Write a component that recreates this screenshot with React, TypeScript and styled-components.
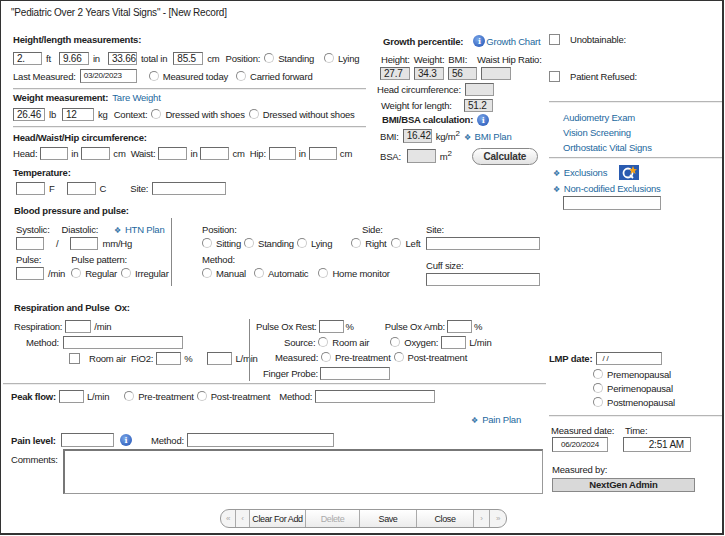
import styled, { createGlobalStyle } from "styled-components";

const Global = createGlobalStyle`
  body { margin: 0; background: #fff; font-family: "Liberation Sans", Arial, sans-serif; font-size: 9.5px; letter-spacing: -0.2px; color: #222; }
`;

const Frame = styled.div`
  width: 721px;
  height: 532px;
  border: 1px solid #333;
  border-right-width: 2px;
  border-bottom-width: 2px;
  display: flex;
  flex-direction: column;
`;
const Title = styled.div`
  height: 28px;
  padding: 6px 0 0 10px;
  box-sizing: border-box;
  font-size: 10px;
`;
const Main = styled.div`
  display: grid;
  grid-template-columns: 545px 176px;
`;
const TopGrid = styled.div`
  display: grid;
  grid-template-columns: 368px 177px;
`;
const Col = styled.div<{ $pl?: number }>`
  display: flex;
  flex-direction: column;
  padding-left: ${(p) => p.$pl ?? 0}px;
`;
const Head = styled.div<{ $mt?: number; $h?: number }>`
  font-weight: bold;
  height: ${(p) => p.$h ?? 14}px;
  line-height: ${(p) => p.$h ?? 14}px;
  margin-top: ${(p) => p.$mt ?? 0}px;
  display: flex;
  align-items: center;
  gap: 4px;
  white-space: nowrap;
`;
const Row = styled.div<{ $h?: number; $mt?: number; $gap?: number; $pl?: number }>`
  display: flex;
  align-items: center;
  height: ${(p) => p.$h ?? 16}px;
  margin-top: ${(p) => p.$mt ?? 0}px;
  padding-left: ${(p) => p.$pl ?? 0}px;
  gap: ${(p) => p.$gap ?? 4}px;
  white-space: nowrap;
`;
const Input = styled.div<{ $w: number; $gray?: boolean; $h?: number; $align?: string }>`
  width: ${(p) => p.$w}px;
  height: ${(p) => p.$h ?? 13}px;
  box-sizing: border-box;
  border: 1px solid #9a9a9a;
  border-top-color: #6a6a6a;
  border-left-color: #6a6a6a;
  background: ${(p) => (p.$gray ? "#e4e4e4" : "#fff")};
  padding: 0 3px;
  line-height: 11px;
  font-size: 10px;
  text-align: ${(p) => p.$align ?? "left"};
  flex-shrink: 0;
`;
const RadioDot = styled.span`
  display: inline-block;
  width: 8px;
  height: 8px;
  border: 1px solid #888;
  border-bottom-color: #ccc;
  border-right-color: #ccc;
  border-radius: 50%;
  margin-right: 4px;
  vertical-align: -1px;
`;
const Opt = styled.span<{ $ml?: number }>`
  margin-left: ${(p) => p.$ml ?? 0}px;
`;
const Box = styled.span`
  display: inline-block;
  flex-shrink: 0;
  width: 9px;
  height: 9px;
  border: 1px solid #888;
  background: #fff;
  margin-right: 6px;
`;
const Link = styled.span`
  color: #23689e;
`;
const Bullet = styled.span`
  color: #3a78aa;
  font-size: 8px;
  margin-right: 4px;
`;
const Sep = styled.div<{ $mt?: number; $mb?: number; $w?: number }>`
  height: 0;
  border-top: 1px solid #b5b5b5;
  border-bottom: 1px solid #eee;
  margin-top: ${(p) => p.$mt ?? 0}px;
  margin-bottom: ${(p) => p.$mb ?? 0}px;
  width: ${(p) => (p.$w ? `${p.$w}px` : "auto")};
`;
const VLine = styled.div`
  width: 1px;
  background: #888;
  align-self: stretch;
  margin: 0 5px 0 3px;
`;
const Split = styled.div<{ $cols: string }>`
  display: grid;
  grid-template-columns: ${(p) => p.$cols};
`;
const Info = styled.span`
  display: inline-flex;
  align-items: center;
  justify-content: center;
  width: 12px;
  height: 12px;
  border-radius: 50%;
  background: radial-gradient(circle at 40% 35%, #7aa6e8, #1d4fb3);
  color: #fff;
  font-weight: bold;
  font-size: 8px;
  font-family: "DejaVu Serif", serif;
  flex-shrink: 0;
`;
const Pill = styled.div`
  border: 1px solid #888;
  border-radius: 9px;
  background: linear-gradient(#fff, #e2e2e2);
  height: 15px;
  width: 64px;
  display: flex;
  align-items: center;
  justify-content: center;
  font-size: 10px;
  font-weight: bold;
  color: #333;
  margin-left: 16px;
`;
const GrayButton = styled.div`
  width: 143px;
  height: 14px;
  box-sizing: border-box;
  border: 1px solid #888;
  background: #d9d9d9;
  font-weight: bold;
  text-align: center;
  line-height: 12px;
  margin-top: 3px;
`;
const Comments = styled.div`
  width: 480px;
  height: 45px;
  border: 1px solid #999;
  border-top: 2px solid #777;
  border-left: 2px solid #777;
  box-sizing: border-box;
`;
const Toolbar = styled.div`
  margin: auto auto 5px;
  display: flex;
  height: 17px;
  border: 1px solid #999;
  border-radius: 9px;
  overflow: hidden;
  background: #f4f4f4;
  transform: translateX(2px);
`;
const TBtn = styled.div<{ $w: number; $dim?: boolean; $bold?: boolean }>`
  width: ${(p) => p.$w}px;
  border-right: 1px solid #aaa;
  display: flex;
  align-items: center;
  justify-content: center;
  white-space: nowrap;
  letter-spacing: -0.4px;
  color: ${(p) => (p.$dim ? "#aaa" : "#222")};
  font-size: ${(p) => (p.$bold ? 9 : 8)}px;
  background: ${(p) => (p.$bold ? "linear-gradient(#fff,#ececec)" : "transparent")};
  &:last-child { border-right: none; }
`;

const R = ({ children, ml }: { children: string; ml?: number }) => (
  <Opt $ml={ml}>
    <RadioDot />
    {children}
  </Opt>
);

const QIcon = () => (
  <svg width="20" height="15" viewBox="0 0 20 15" style={{ marginLeft: 8 }}>
    <rect width="20" height="15" fill="#2a5bb0" />
    <circle cx="9" cy="8" r="4.5" fill="none" stroke="#fff" strokeWidth="1.8" />
    <line x1="11" y1="10" x2="14" y2="13" stroke="#fff" strokeWidth="1.8" />
    <polygon points="14,1 15.2,4 18,4.2 15.8,6 16.6,9 14,7.3 11.4,9 12.2,6 10,4.2 12.8,4" fill="#f6a21a" />
  </svg>
);

export default function App() {
  return (
    <>
      <Global />
      <Frame>
        <Title>"Pediatric Over 2 Years Vital Signs" - [New Record]</Title>
        <Main>
          <Col>
            <TopGrid>
              <Col $pl={12}>
                <Head $mt={4}>Height/length measurements:</Head>
                <Row $h={18} $mt={2}>
                  <Input $w={29}>2.</Input><span>ft</span>
                  <Input $w={30} style={{ marginLeft: 4 }}>9.66</Input><span>in</span>
                  <Input $w={29} style={{ marginLeft: 4 }}>33.66</Input><span>total in</span>
                  <Input $w={30} style={{ marginLeft: 2 }}>85.5</Input><span>cm</span>
                  <span style={{ marginLeft: 2 }}>Position:</span>
                  <R>Standing</R><R ml={6}>Lying</R>
                </Row>
                <Row $h={18}>
                  <span>Last Measured:</span>
                  <Input $w={57} $h={14} style={{ fontSize: 8 }}>03/20/2023</Input>
                  <R ml={8}>Measured today</R><R ml={4}>Carried forward</R>
                </Row>
                <Sep $mt={3} $w={353} />
                <Head $mt={1}>Weight measurement: <Link style={{ fontWeight: "normal" }}>Tare Weight</Link></Head>
                <Row $h={18}>
                  <Input $w={32}>26.46</Input><span>lb</span>
                  <Input $w={32} style={{ marginLeft: 2 }}>12</Input><span>kg</span>
                  <span style={{ marginLeft: 2 }}>Context:</span>
                  <R>Dressed with shoes</R><R>Dressed without shoes</R>
                </Row>
                <Sep $mt={3} $w={353} />
                <Head $mt={3}>Head/Waist/Hip circumference:</Head>
                <Row $h={16} $gap={3}>
                  <span>Head:</span><Input $w={28} />in<Input $w={29} />cm
                  <span style={{ marginLeft: 2 }}>Waist:</span><Input $w={29} />in<Input $w={29} />cm
                  <span style={{ marginLeft: 2 }}>Hip:</span><Input $w={27} />in<Input $w={28} />cm
                </Row>
                <Head $mt={5}>Temperature:</Head>
                <Row $h={16} $pl={3}>
                  <Input $w={29} />F<Input $w={29} style={{ marginLeft: 8 }} />C
                  <span style={{ marginLeft: 20 }}>Site:</span><Input $w={74} />
                </Row>
              </Col>
              <Col $pl={8}>
                <Row $h={16} $mt={4} style={{ paddingLeft: 6 }}>
                  <b>Growth percentile:</b><Info style={{ marginLeft: 6 }}>i</Info><Link style={{ marginLeft: -3 }}>Growth Chart</Link>
                </Row>
                <Row $h={12} $mt={4} $gap={4} style={{ paddingLeft: 4 }}>
                  <span>Height:</span><span>Weight:</span><span>BMI:</span><span style={{ marginLeft: 6 }}>Waist Hip Ratio:</span>
                </Row>
                <Row $h={16} $pl={3}>
                  <Input $w={30} $gray>27.7</Input><Input $w={30} $gray>34.3</Input>
                  <Input $w={29} $gray>56</Input><Input $w={30} $gray />
                </Row>
                <Row $h={16}>
                  <span>Head circumference:</span><Input $w={29} $gray />
                </Row>
                <Row $h={16} $pl={4}>
                  <span style={{ width: 79 }}>Weight for length:</span><Input $w={29} $gray>51.2</Input>
                </Row>
                <Head style={{ paddingLeft: 5 }}>BMI/BSA calculation: <Info>i</Info></Head>
                <Row $h={18} $pl={3}>
                  <span>BMI:</span><Input $w={29} $gray $h={14}>16.42</Input>
                  <span>kg/m<sup style={{ fontSize: 8 }}>2</sup></span>
                  <Link><Bullet>❖</Bullet>BMI Plan</Link>
                </Row>
                <Row $h={18} $mt={2} $pl={3}>
                  <span>BSA:</span><Input $w={29} $gray $h={14} style={{ marginLeft: 2 }} />
                  <span>m<sup style={{ fontSize: 8 }}>2</sup></span>
                  <Pill>Calculate</Pill>
                </Row>
              </Col>
            </TopGrid>

            <Col $pl={13}>
              <Head $mt={8}>Blood pressure and pulse:</Head>
              <Split $cols="154px auto 224px 120px">
                <Col>
                  <Row $h={12} $mt={5} $gap={12} $pl={2}>
                    <span>Systolic:</span><span>Diastolic:</span><Link style={{ marginLeft: 4 }}><Bullet>❖</Bullet>HTN Plan</Link>
                  </Row>
                  <Row $h={16} $pl={2}>
                    <Input $w={28} /><span style={{ margin: "0 8px" }}>/</span><Input $w={28} />mm/Hg
                  </Row>
                  <Row $h={12} $mt={2} $gap={30} $pl={2}>
                    <span>Pulse:</span><span>Pulse pattern:</span>
                  </Row>
                  <Row $h={16} $pl={2}>
                    <Input $w={28} />/min<R ml={2}>Regular</R><R>Irregular</R>
                  </Row>
                </Col>
                <VLine />
                <Col>
                  <Row $h={12} $mt={5}>
                    <span style={{ width: 156 }}>Position:</span><span>Side:</span>
                  </Row>
                  <Row $h={16} $gap={3}>
                    <R>Sitting</R><R>Standing</R><R>Lying</R>
                    <R ml={16}>Right</R><R ml={2}>Left</R>
                  </Row>
                  <Row $h={12} $mt={2}><span>Method:</span></Row>
                  <Row $h={16} $gap={8}>
                    <R>Manual</R><R>Automatic</R><R ml={2}>Home monitor</R>
                  </Row>
                </Col>
                <Col>
                  <Row $h={12} $mt={5}><span>Site:</span></Row>
                  <Input $w={114} $h={13} style={{ marginTop: 2 }} />
                  <Row $h={12} $mt={9}><span>Cuff size:</span></Row>
                  <Input $w={114} $h={13} style={{ marginTop: 2 }} />
                </Col>
              </Split>

              <Head $mt={15}>Respiration and Pulse &nbsp;Ox:</Head>
              <Split $cols="232px auto 290px" style={{ marginTop: 4 }}>
                <Col>
                  <Row $h={15} $gap={3}>
                    <span>Respiration:</span><Input $w={26} />/min
                  </Row>
                  <Row $h={16} $gap={4} $pl={12}>
                    <span>Method:</span><Input $w={120} />
                  </Row>
                  <Row $h={16} $gap={3} $pl={55}>
                    <Box />Room air<span style={{ marginLeft: 2 }}>FiO2:</span><Input $w={25} />%<Input $w={25} style={{ marginLeft: 12 }} />L/min
                  </Row>
                </Col>
                <VLine />
                <Col>
                  <Row $h={15} $gap={2}>
                    <span>Pulse Ox Rest:</span><Input $w={25} />%
                    <span style={{ marginLeft: 29 }}>Pulse Ox Amb:</span><Input $w={25} />%
                  </Row>
                  <Row $h={16} $gap={3} $pl={28}>
                    <span>Source:</span><R>Room air</R><R ml={18}>Oxygen:</R><Input $w={25} />L/min
                  </Row>
                  <Row $h={15} $gap={3} $pl={19}>
                    <span>Measured:</span><R>Pre-treatment</R><R>Post-treatment</R>
                  </Row>
                  <Row $h={16} $gap={2} $pl={7}>
                    <span>Finger Probe:</span><Input $w={70} />
                  </Row>
                </Col>
              </Split>
            </Col>
            <Sep $mt={2} style={{ marginLeft: 2 }} />
            <Col $pl={10}>
              <Row $h={14} $mt={4} $gap={3}>
                <b>Peak flow:</b><Input $w={25} />L/min
                <R ml={12}>Pre-treatment</R><R>Post-treatment</R>
                <span style={{ marginLeft: 6 }}>Method:</span><Input $w={120} />
              </Row>
              <Row $h={14} $mt={9} style={{ justifyContent: "flex-end", paddingRight: 25 }}>
                <Link><Bullet>❖</Bullet>Pain Plan</Link>
              </Row>
              <Row $h={14} $mt={7} $gap={3}>
                <b style={{ width: 47 }}>Pain level:</b><Input $w={53} $h={14} /><Info style={{ marginLeft: 3 }}>i</Info>
                <span style={{ marginLeft: 16 }}>Method:</span><Input $w={147} $h={14} />
              </Row>
              <Row $h={45} $mt={2} style={{ alignItems: "flex-start" }} $gap={3}>
                <span style={{ width: 49, marginTop: 5 }}>Comments:</span><Comments />
              </Row>
            </Col>
          </Col>

          <Col $pl={3}>
            <Row $h={16} $mt={2}><Box />Unobtainable:</Row>
            <Row $h={16} $mt={21}><Box />Patient Refused:</Row>
            <Sep $mt={17} />
            <Col $pl={14}>
              <Row $h={15} $mt={7}><Link>Audiometry Exam</Link></Row>
              <Row $h={15}><Link>Vision Screening</Link></Row>
              <Row $h={15}><Link>Orthostatic Vital Signs</Link></Row>
            </Col>
            <Sep $mt={2} />
            <Col $pl={4}>
              <Row $h={16} $mt={5}><Link><Bullet>❖</Bullet>Exclusions</Link><QIcon /></Row>
              <Row $h={15} $mt={1}><Link><Bullet>❖</Bullet>Non-codified Exclusions</Link></Row>
              <Input $w={98} $h={14} style={{ marginLeft: 10 }} />
            </Col>
            <Row $h={14} $mt={141}>
              <b>LMP date:</b><Input $w={66} $h={13} style={{ fontSize: 8 }}>&nbsp;/ /</Input>
            </Row>
            <Col $pl={44}>
              <Row $h={14} $mt={2}><R>Premenopausal</R></Row>
              <Row $h={14}><R>Perimenopausal</R></Row>
              <Row $h={14}><R>Postmenopausal</R></Row>
            </Col>
            <Sep $mt={6} />
            <Row $h={12} $mt={7} $pl={2}>
              <span style={{ width: 70 }}>Measured date:</span><span>Time:</span>
            </Row>
            <Row $h={16} $pl={3} $gap={15}>
              <Input $w={56} $h={15} $align="center" style={{ fontSize: 8, lineHeight: "13px" }}>06/20/2024</Input>
              <Input $w={68} $h={15} $align="right" style={{ lineHeight: "13px", paddingRight: 6 }}>2:51 AM</Input>
            </Row>
            <Row $h={12} $mt={11} $pl={3}><span>Measured by:</span></Row>
            <Col $pl={3}><GrayButton>NextGen Admin</GrayButton></Col>
          </Col>
        </Main>
        <Toolbar>
          <TBtn $w={14} $dim>«</TBtn>
          <TBtn $w={13} $dim>‹</TBtn>
          <TBtn $w={55} $bold>Clear For Add</TBtn>
          <TBtn $w={53} $dim $bold>Delete</TBtn>
          <TBtn $w={56} $bold>Save</TBtn>
          <TBtn $w={56} $bold>Close</TBtn>
          <TBtn $w={15} $dim>›</TBtn>
          <TBtn $w={16} $dim>»</TBtn>
        </Toolbar>
      </Frame>
    </>
  );
}
